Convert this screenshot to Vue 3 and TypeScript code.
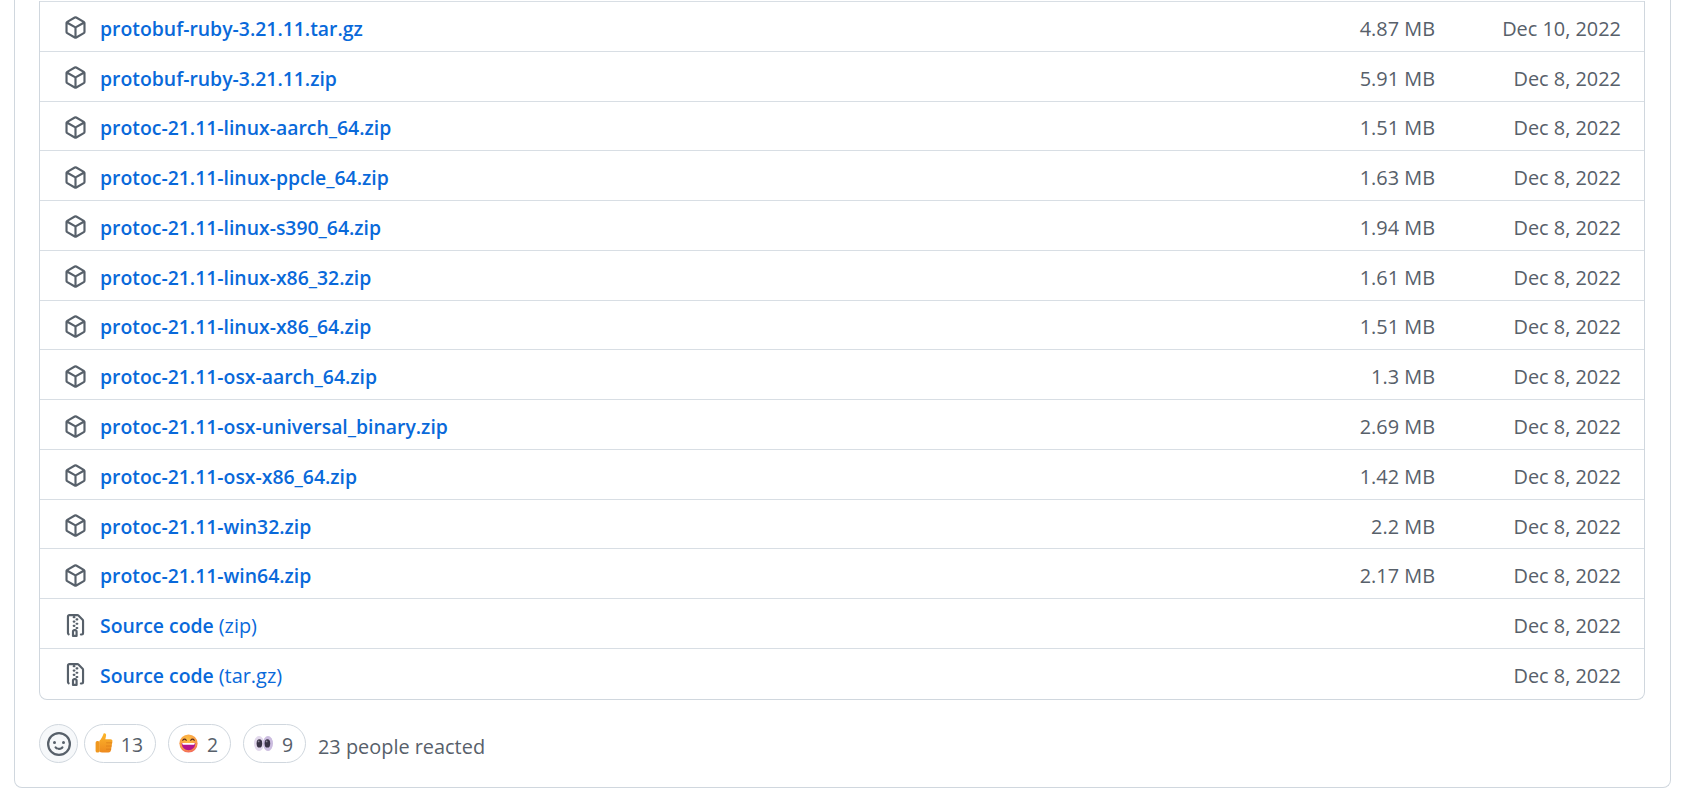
<script setup lang="ts">
const pkg =
  'm8.878.392 5.25 3.045c.54.314.872.89.872 1.514v6.098a1.75 1.75 0 0 1-.872 1.514l-5.25 3.045a1.75 1.75 0 0 1-1.756 0l-5.25-3.045A1.75 1.75 0 0 1 1 11.049V4.951c0-.624.332-1.201.872-1.514L7.122.392a1.75 1.75 0 0 1 1.756 0ZM7.875 1.69l-4.63 2.685L8 7.133l4.755-2.758-4.63-2.685a.248.248 0 0 0-.25 0ZM2.5 5.677v5.372c0 .09.047.171.125.216l4.625 2.683V8.432Zm6.25 8.271 4.625-2.683a.25.25 0 0 0 .125-.216V5.677L8.75 8.432Z'
const zip =
  'M3.5 1.75v11.5c0 .09.048.173.126.217a.75.75 0 0 1-.752 1.298A1.748 1.748 0 0 1 2 13.25V1.75C2 .784 2.784 0 3.75 0h5.586c.464 0 .909.185 1.237.513l2.914 2.914c.329.328.513.773.513 1.237v8.586A1.75 1.75 0 0 1 12.25 15h-.5a.75.75 0 0 1 0-1.5h.5a.25.25 0 0 0 .25-.25V4.664a.25.25 0 0 0-.073-.177L9.513 1.573a.25.25 0 0 0-.177-.073H7.25a.75.75 0 0 1 0 1.5h-.5a.75.75 0 0 1 0-1.5h-3a.25.25 0 0 0-.25.25Zm3.75 8.75h.5c.966 0 1.75.784 1.75 1.75v3a.75.75 0 0 1-.75.75h-2.5a.75.75 0 0 1-.75-.75v-3c0-.966.784-1.75 1.75-1.75ZM6 5.25a.75.75 0 0 1 .75-.75h.5a.75.75 0 0 1 0 1.5h-.5A.75.75 0 0 1 6 5.25Zm.75 2.25h.5a.75.75 0 0 1 0 1.5h-.5a.75.75 0 0 1 0-1.5ZM8 6.75A.75.75 0 0 1 8.75 6h.5a.75.75 0 0 1 0 1.5h-.5A.75.75 0 0 1 8 6.75ZM8.75 3h.5a.75.75 0 0 1 0 1.5h-.5a.75.75 0 0 1 0-1.5ZM8 9.75A.75.75 0 0 1 8.75 9h.5a.75.75 0 0 1 0 1.5h-.5A.75.75 0 0 1 8 9.75Zm-1 2.5v2.25h1v-2.25a.25.25 0 0 0-.25-.25h-.5a.25.25 0 0 0-.25.25Z'
const smiley =
  'M8 0a8 8 0 1 1 0 16A8 8 0 0 1 8 0ZM1.5 8a6.5 6.5 0 1 0 13 0 6.5 6.5 0 0 0-13 0Zm3.82 1.636a.75.75 0 0 1 1.038.175l.007.009c.103.118.22.222.35.31.264.178.683.37 1.285.37.602 0 1.02-.192 1.285-.371.13-.088.247-.192.35-.31l.007-.008a.75.75 0 0 1 1.222.87l-.022-.015c.02.013.021.015.021.015v.001l-.001.002-.002.003-.005.007-.014.019a2.066 2.066 0 0 1-.184.213c-.16.166-.338.316-.53.445-.63.418-1.37.638-2.127.629-.946 0-1.652-.308-2.126-.63a3.331 3.331 0 0 1-.715-.657l-.014-.02-.005-.006-.002-.003v-.002h-.001l.613-.432-.614.43a.75.75 0 0 1 .183-1.044ZM12 7a1 1 0 1 1-2 0 1 1 0 0 1 2 0ZM5 8a1 1 0 1 1 0-2 1 1 0 0 1 0 2Zm5.25 2.25.592.416a97.71 97.71 0 0 0-.592-.416Z'

const assets = [
  { name: 'protobuf-ruby-3.21.11.tar.gz', size: '4.87 MB', date: 'Dec 10, 2022' },
  { name: 'protobuf-ruby-3.21.11.zip', size: '5.91 MB', date: 'Dec 8, 2022' },
  { name: 'protoc-21.11-linux-aarch_64.zip', size: '1.51 MB', date: 'Dec 8, 2022' },
  { name: 'protoc-21.11-linux-ppcle_64.zip', size: '1.63 MB', date: 'Dec 8, 2022' },
  { name: 'protoc-21.11-linux-s390_64.zip', size: '1.94 MB', date: 'Dec 8, 2022' },
  { name: 'protoc-21.11-linux-x86_32.zip', size: '1.61 MB', date: 'Dec 8, 2022' },
  { name: 'protoc-21.11-linux-x86_64.zip', size: '1.51 MB', date: 'Dec 8, 2022' },
  { name: 'protoc-21.11-osx-aarch_64.zip', size: '1.3 MB', date: 'Dec 8, 2022' },
  { name: 'protoc-21.11-osx-universal_binary.zip', size: '2.69 MB', date: 'Dec 8, 2022' },
  { name: 'protoc-21.11-osx-x86_64.zip', size: '1.42 MB', date: 'Dec 8, 2022' },
  { name: 'protoc-21.11-win32.zip', size: '2.2 MB', date: 'Dec 8, 2022' },
  { name: 'protoc-21.11-win64.zip', size: '2.17 MB', date: 'Dec 8, 2022' },
  { name: 'Source code', ext: '(zip)', size: '', date: 'Dec 8, 2022' },
  { name: 'Source code', ext: '(tar.gz)', size: '', date: 'Dec 8, 2022' },
]
</script>

<template>
  <div class="page">
    <div class="release">
      <ul class="assets">
        <li v-for="(a, i) in assets" :key="i" class="asset">
          <svg class="asset-icon" viewBox="0 0 16 16"><path :d="a.ext ? zip : pkg" /></svg>
          <a class="asset-name">{{ a.name }}<span v-if="a.ext" class="asset-ext">{{ a.ext }}</span></a>
          <span class="asset-size">{{ a.size }}</span>
          <span class="asset-date">{{ a.date }}</span>
        </li>
      </ul>

      <div class="reactions">
        <button class="react-add">
          <svg viewBox="0 0 16 16"><path :d="smiley" /></svg>
        </button>

        <button class="pill pill-thumb">
          <svg class="emoji emoji-thumb" viewBox="0 0 18 20">
            <defs>
              <linearGradient id="thumb" x1="0" y1="0" x2="0" y2="1">
                <stop offset="0" stop-color="#fcb62b" />
                <stop offset="1" stop-color="#ee8a1e" />
              </linearGradient>
            </defs>
            <path fill="url(#thumb)" d="M8.6.5c1.5-.6 2.6.3 2.5 1.8-.1 1.3-.5 2.7-.8 3.9h5.2c1.4 0 2.1.9 1.9 2.1l-1.5 9.2c-.3 1.3-1.1 2-2.5 2H7.2c-1.2 0-2.1-.4-2.9-1V8C6.3 6 7.8 3.4 8.6.5Z" />
            <rect x="0.6" y="8" width="4" height="11.6" rx="1.7" fill="#f0981f" />
            <path d="M11.2 9.8h6M11 13h5.8M11 16.2h5.2" stroke="#dd7f1a" stroke-width=".8" fill="none" />
          </svg>
          <span>13</span>
        </button>

        <button class="pill pill-grin">
          <svg class="emoji" viewBox="0 0 20 20">
            <defs>
              <radialGradient id="face" cx=".45" cy=".3" r=".8">
                <stop offset="0" stop-color="#fdc340" />
                <stop offset=".65" stop-color="#f9964a" />
                <stop offset="1" stop-color="#ef4c6a" />
              </radialGradient>
            </defs>
            <circle cx="10" cy="10" r="9.6" fill="url(#face)" />
            <path d="M4 6.6c1-1.5 2.7-1.5 3.6 0M12.4 6.6c1-1.5 2.7-1.5 3.6 0" stroke="#5a2a1d" stroke-width="1.3" fill="none" stroke-linecap="round" />
            <path d="M2.8 9.6h14.4c0 4.6-3.2 7.6-7.2 7.6s-7.2-3-7.2-7.6Z" fill="#b5148c" />
            <path d="M3.4 9.6h13.2c0 1-.3 1.5-.8 1.7H4.2c-.5-.2-.8-.7-.8-1.7Z" fill="#fff" />
          </svg>
          <span>2</span>
        </button>

        <button class="pill pill-eyes">
          <svg class="emoji emoji-eyes" viewBox="0 0 19 15">
            <ellipse cx="5" cy="7.5" rx="5" ry="7.4" fill="#e2d8ec" />
            <ellipse cx="14" cy="7.5" rx="5" ry="7.4" fill="#cbbcdf" />
            <ellipse cx="5.4" cy="7.4" rx="2.8" ry="4.2" fill="#3a3446" />
            <ellipse cx="13.4" cy="7.4" rx="2.8" ry="4.2" fill="#3a3446" />
            <circle cx="4.6" cy="5.4" r=".9" fill="#8d8799" />
            <circle cx="12.6" cy="5.4" r=".9" fill="#8d8799" />
          </svg>
          <span>9</span>
        </button>

        <span class="react-total">23 people reacted</span>
      </div>
    </div>
  </div>
</template>

<style>
html,
body {
  background: #fff;
  overflow: hidden;
}
</style>

<style scoped>
.page {
  height: 793px;
  padding: 0 31px 0 14px;
  box-sizing: border-box;
  font-family: "Open Sans", "Noto Sans", sans-serif;
  color: #57606a;
}

.release {
  height: 788px;
  box-sizing: border-box;
  padding: 1px 25px 0 24px;
  border: 1px solid #d0d7de;
  border-top: none;
  border-radius: 0 0 8px 8px;
}

.assets {
  list-style: none;
  margin: 0;
  padding: 0 0 1px;
  border: 1px solid #d0d7de;
  border-top: none;
  border-radius: 0 0 8px 8px;
}

.asset {
  display: flex;
  align-items: center;
  height: 49.77px;
  box-sizing: border-box;
  padding: 0 23px 0 24px;
  border-top: 1px solid #d8dee4;
  font-size: 19.9px;
}

.asset-icon {
  width: 23px;
  height: 23px;
  margin: 3px 13px 0 0;
  fill: #57606a;
  flex-shrink: 0;
}

.asset-name,
.asset-size,
.asset-date {
  padding-top: 4px;
}

.asset-name {
  flex: 1;
  color: #0969da;
  font-size: 19.4px;
  font-weight: 600;
  white-space: nowrap;
}

.asset-ext {
  margin-left: 5px;
  font-size: 19.9px;
  font-weight: 400;
}

.asset-size {
  width: 110px;
  text-align: right;
}

.asset-date {
  width: 186px;
  text-align: right;
}

.reactions {
  display: flex;
  align-items: center;
  margin-top: 24px;
  height: 39px;
}

.react-add {
  width: 39px;
  height: 39px;
  padding: 0;
  display: flex;
  align-items: center;
  justify-content: center;
  border: 1px solid #d0d7de;
  border-radius: 50%;
  background: #f6f8fa;
  margin-right: 6px;
}

.react-add svg {
  width: 24px;
  height: 24px;
  margin-top: 1px;
  fill: #57606a;
}

.pill {
  height: 39px;
  box-sizing: border-box;
  padding: 0 12px 0 10px;
  display: flex;
  align-items: center;
  justify-content: space-between;
  border: 1px solid #d0d7de;
  border-radius: 20px;
  background: #fff;
  font-family: inherit;
  font-size: 19.4px;
  color: #57606a;
  margin-right: 12px;
}

.pill span {
  padding-top: 2px;
}

.pill-thumb {
  width: 72px;
}

.pill-grin,
.pill-eyes {
  width: 63px;
}

.emoji {
  width: 19px;
  height: 19px;
  flex-shrink: 0;
}

.emoji-thumb {
  width: 18px;
  height: 20px;
}

.emoji-eyes {
  height: 15px;
}

.react-total {
  padding-top: 6px;
  font-size: 19.9px;
}
</style>
